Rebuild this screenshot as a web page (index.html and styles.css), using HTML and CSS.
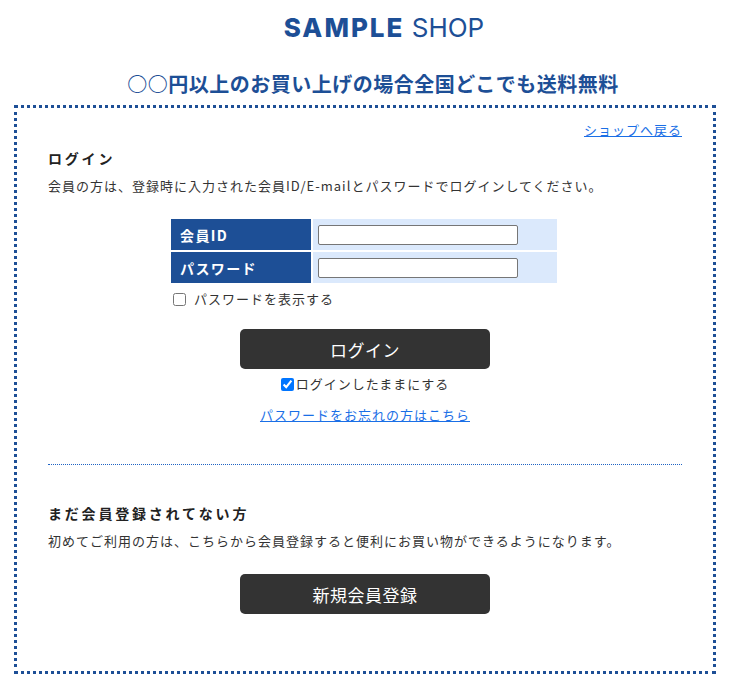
FILE: index.html
```html
<!DOCTYPE html>
<html lang="ja">
  <head>
    <title>ログイン - SAMPLE SHOP</title>
    <meta charset="UTF-8" />
    <meta name="viewport" content="width=device-width, initial-scale=1.0" />
    <link rel="stylesheet" href="styles.css">
  </head>
  <body>
    <h1 class="logo"><b>SAMPLE</b> SHOP</h1>
    <p class="notice">○○円以上のお買い上げの場合全国どこでも送料無料</p>

    <div class="box">
      <div class="back"><a href="#">ショップへ戻る</a></div>

      <h2>ログイン</h2>
      <p class="lead">会員の方は、登録時に入力された会員ID/E-mailとパスワードでログインしてください。</p>

      <form class="login">
        <table class="fields">
          <tr>
            <th>会員ID</th>
            <td><input type="text" id="loginId" /></td>
          </tr>
          <tr>
            <th>パスワード</th>
            <td><input type="password" id="loginPass" /></td>
          </tr>
        </table>
        <label class="show-pass"><input type="checkbox" id="showPass" />パスワードを表示する</label>

        <button type="submit" class="btn">ログイン</button>
        <label class="keep"><input type="checkbox" checked />ログインしたままにする</label>
        <div class="forgot"><a href="#">パスワードをお忘れの方はこちら</a></div>
      </form>

      <hr class="divider" />

      <h2>まだ会員登録されてない方</h2>
      <p class="lead">初めてご利用の方は、こちらから会員登録すると便利にお買い物ができるようになります。</p>
      <button type="button" class="btn">新規会員登録</button>
    </div>

    <script>
      document.getElementById("showPass").addEventListener("change", (e) => {
        document.getElementById("loginPass").type = e.target.checked ? "text" : "password";
      });
    </script>
  </body>
</html>
```

FILE: styles.css
```css
body {
  margin: 0;
  font-family: "Noto Sans CJK JP", sans-serif;
  color: #333;
  font-size: 13px;
  letter-spacing: 1px;
}
a {
  color: #1a6fe6;
}
.logo {
  margin: 12px 0 0;
  padding-left: 38px;
  text-align: center;
  font-family: Inter, "Liberation Sans", sans-serif;
  font-size: 26px;
  line-height: 32px;
  font-weight: 400;
  letter-spacing: 0;
  color: #1d4f96;
}
.logo b {
  font-weight: 800;
  letter-spacing: 2px;
}
.notice {
  margin: 27px 0 8px;
  padding-left: 16px;
  text-align: center;
  font-size: 20px;
  line-height: 26px;
  font-weight: bold;
  letter-spacing: 0.5px;
  color: #1d4f96;
}
.box {
  width: 634px;
  margin: 0 auto;
  padding: 12px 31px 57px;
  border: 3px dotted #1d4f96;
}
.back {
  text-align: right;
  line-height: 20px;
}
h2 {
  margin: 8px 0 0;
  font-size: 14px;
  line-height: 20px;
  letter-spacing: 2.8px;
  color: #222;
}
.lead {
  margin: 8px 0 0;
  line-height: 20px;
}
.login {
  display: flex;
  flex-direction: column;
  align-items: center;
}
.fields {
  margin: 21px 0 0 -2px;
  border-spacing: 2px;
}
.fields th {
  width: 131px;
  height: 31px;
  padding: 0 0 0 9px;
  background-color: #1d4f96;
  color: white;
  text-align: left;
  font-size: 14px;
  letter-spacing: 1.4px;
}
.fields td {
  width: 239px;
  padding: 0 0 0 5px;
  background-color: #dbe9fc;
}
.fields input {
  width: 200px;
  height: 20px;
  box-sizing: border-box;
  border: 1px solid #767676;
  border-radius: 2px;
  margin: 0;
  display: block;
}
.show-pass {
  align-self: flex-start;
  margin: 4px 0 0 120px;
  line-height: 20px;
  display: flex;
  align-items: center;
}
.show-pass input {
  margin: 0 8px 0 5px;
}
.btn {
  display: block;
  width: 250px;
  height: 40px;
  margin: 20px auto 0;
  background-color: #333;
  color: white;
  border: none;
  border-radius: 5px;
  font-family: inherit;
  font-size: 17px;
  letter-spacing: 0.5px;
  cursor: pointer;
}
.keep {
  margin-top: 5px;
  line-height: 20px;
  display: flex;
  align-items: center;
}
.keep input {
  margin: 0 2px 0 0;
}
.forgot {
  margin-top: 11px;
  line-height: 20px;
}
.divider {
  margin: 39px 0 0;
  border: none;
  border-top: 1px dotted #1f63c4;
}
.divider + h2 {
  margin-top: 38px;
}
.lead + .btn {
  margin-top: 23px;
}
```
